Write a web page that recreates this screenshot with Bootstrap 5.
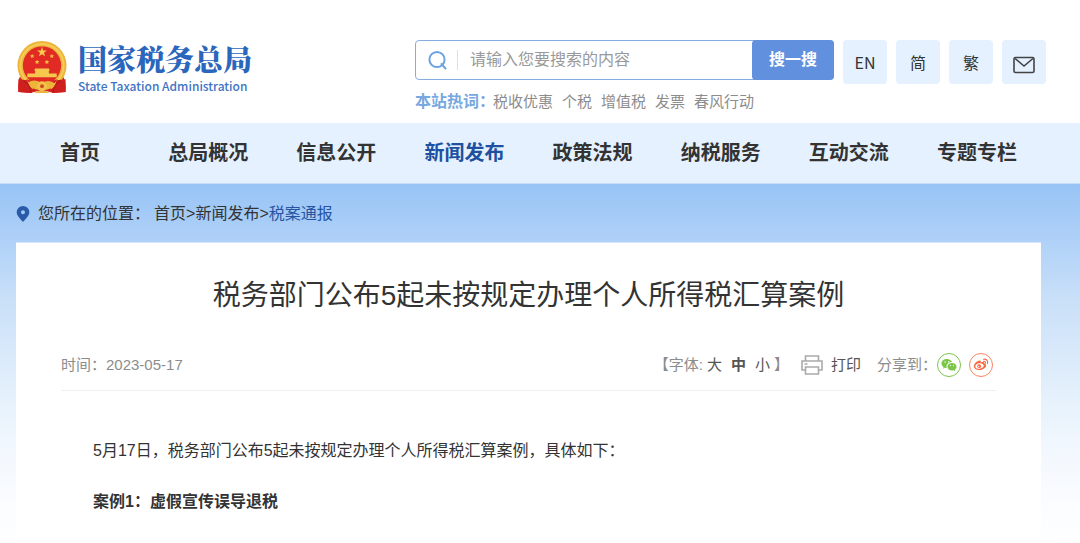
<!DOCTYPE html>
<html lang="zh-CN">
<head>
<meta charset="utf-8">
<meta name="viewport" content="width=device-width, initial-scale=1">
<title>税务部门公布5起未按规定办理个人所得税汇算案例</title>
<link rel="stylesheet" href="https://cdn.jsdelivr.net/npm/bootstrap@5.3.0/dist/css/bootstrap.min.css">
<style>
  body { font-family: "Liberation Sans", "Noto Sans CJK SC", sans-serif; font-size: 16px; line-height: 24px; color: #333; background: #fff; }
  a { color: inherit; text-decoration: none; }
  .site-wrap { padding-left: 16px; padding-right: 39px; }
  .site-header { padding: 40px 34px 9px 16px; }
  .brand-cn { font-family: "Noto Serif CJK SC", "Noto Sans CJK SC", serif; font-size: 29px; line-height: 38px; font-weight: 900; color: #2b66bd; }
  .brand-en { font-family: "Noto Sans CJK SC", sans-serif; font-size: 12px; line-height: 16px; font-weight: 500; color: #3f74c4; }
  .brand-en, .brand-cn { white-space: nowrap; }
  .brand-text { padding-left: 10px; }
  .header-tools { flex: 0 1 631px; }
  .tool-row { gap: 9px; }
  .search-box { height: 40px; border: 1px solid #86ade2; border-radius: 4px; }
  .search-box .form-control { border: 0; border-left: 1px solid #e0e0e0; border-radius: 0; height: 20px; padding: 0 12px; color: #666; box-shadow: none; background: none; }
  .search-box .form-control::placeholder { color: #999; opacity: 1; }
  .search-box label { padding: 0 10px 0 12px; }
  .search-btn { align-self: stretch; width: 82px; margin: -1px; background: #6090de; color: #fff; font-weight: 700; border: 0; border-radius: 4px; padding: 0; flex: none; }
  .tile { width: 44px; height: 44px; padding: 0; background: #e5f1ff; border: 0; border-radius: 4px; color: #333; font-family: "Noto Sans CJK SC", sans-serif; flex: none; }
  .hot-words { gap: 9px; font-size: 15px; line-height: 24px; margin-top: 6px; color: #8c8c8c; }
  .hot-title { width: 69px; white-space: nowrap; font-size: 16px; color: #78a8e0; font-weight: 700; }
  .main-nav { background: #e5f1ff; border-bottom: 1px solid #c5dcf9; }
  .main-nav .nav-link { color: #333; font-size: 20px; line-height: 28px; font-weight: 700; padding: 16px 0; white-space: nowrap; }
  .main-nav .nav-link.active { color: #2050a0; }
  .page-area { min-height: calc(100vh - 184px); background: linear-gradient(#97c4f5 0, #b0d1f8 58px, #c9e0f8 116px, #d9e9fa 170px, #e7f2fc 220px, #f3f8fe 270px, #fafcff 320px, #fff 360px); }
  .crumbs { padding-top: 18px; padding-bottom: 16px; }
  .crumbs .current { color: #2654a3; }
  .article { background: #fff; border-top: 1px solid #d5e6fb; padding: 35px 45px 30px; }
  .article h1 { font-size: 28px; line-height: 36px; font-weight: 400; margin: 0; }
  .meta { margin-top: 37px; padding: 0 3px 11px 0; border-bottom: 1px solid #f0f0f0; font-size: 15px; line-height: 28px; color: #8c8c8c; }
  .meta button { border: 0; background: none; padding: 0; color: #555; }
  .size-set { gap: 9px; }
  .article-body { padding: 48px 32px 0; }
  .article-body p { margin: 0 0 27px; }
  .article-body p:last-child { margin: 0; }
</style>
</head>
<body>
<header class="site-header d-flex justify-content-between align-items-start">
  <a href="#" class="d-flex align-items-center">
    <svg width="52" height="54" viewBox="0 0 52 55" aria-hidden="true">
      <path d="M3 38 Q1 47 2 53 L14 54 26 51 38 54 50 53 Q51 46 48 38Z" fill="#d3221f"/>
      <circle cx="26" cy="26" r="25" fill="#edb43a"/>
      <circle cx="26" cy="26" r="22" fill="none" stroke="#f6cd58" stroke-width="2"/>
      <circle cx="26" cy="26" r="19.500" fill="#e12a24"/>
      <path d="M26 7l1.2 3.6h3.8l-3 2.3 1.1 3.7-3.1-2.2-3.1 2.2 1.1-3.7-3-2.3h3.8z" fill="#f7cb4c"/>
      <g fill="#f1b941"><path d="M16 14l.7 1.5 1.6.2-1.1 1.1.3 1.6-1.5-.8-1.5.8.3-1.6-1.1-1.1 1.6-.2zM36 14l.7 1.5 1.6.2-1.1 1.1.3 1.6-1.5-.8-1.5.8.3-1.6-1.1-1.1 1.6-.2zM21 20l.7 1.5 1.6.2-1.1 1.1.3 1.6-1.5-.8-1.5.8.3-1.6-1.1-1.1 1.6-.2zM31 20l.7 1.5 1.6.2-1.1 1.1.3 1.6-1.5-.8-1.5.8.3-1.6-1.1-1.1 1.6-.2z"/>
      <path d="M19 29h14l1 2h-1v3h8v4H11v-4h8v-3h-1z" fill="#f5c84d"/></g>
      <path d="M2 40l9 1 5 13-14-1zM50 40l-9 1-5 13 14-1z" fill="#cf1f1e"/>
      <path d="M10 40q16 6 32 0l-5 6q-11-6-22 0z" fill="#d3221f"/>
      <path d="M12 43q7-4 14 1 7-5 14 1l-4 5q-5-4-10-1-6-3-10 1z" fill="#edb43a"/>
      <circle cx="26" cy="47" r="5" fill="#f2c14a"/><circle cx="26" cy="47" r="2" fill="#cf4a20"/>
      <path d="M7 42q6 1 8 11M45 42q-6 1-8 11" stroke="#a81818" fill="none"/>
      <path d="M18 54q8-5 16 0z" fill="#edb43a"/>
    </svg>
    <span class="brand-text d-flex flex-column">
      <span class="brand-cn">国家税务总局</span>
      <span class="brand-en">State Taxation Administration</span>
    </span>
  </a>
  <div class="header-tools">
    <div class="tool-row d-flex">
      <form class="search-box d-flex align-items-center flex-grow-1">
        <label for="q" class="d-flex" aria-label="搜索"><svg width="19" height="20" viewBox="0 0 19 20" fill="none" stroke="#6ba2e2" stroke-width="2"><circle cx="9" cy="9.500" r="7.6"/><path d="M13.500 14l4 4.500" stroke-linecap="round"/></svg></label>
        <input id="q" class="form-control" type="text" placeholder="请输入您要搜索的内容">
        <button type="button" class="search-btn">搜一搜</button>
      </form>
      <button type="button" class="tile">EN</button>
      <button type="button" class="tile">简</button>
      <button type="button" class="tile">繁</button>
      <button type="button" class="tile" aria-label="邮箱"><svg width="22" height="18" viewBox="0 0 22 18" fill="none" stroke="#444" stroke-width="1.6"><rect x="1" y="1.500" width="20" height="15" rx="1.5"/><path d="M2 2.500l9 7.5 9-7.500"/></svg></button>
    </div>
    <div class="hot-words d-flex"><span class="hot-title">本站热词：</span><a href="#">税收优惠</a><a href="#">个税</a><a href="#">增值税</a><a href="#">发票</a><a href="#">春风行动</a></div>
  </div>
</header>
<nav class="main-nav">
  <div class="site-wrap">
    <div class="nav nav-justified flex-nowrap">
      <a class="nav-link" href="#">首页</a><a class="nav-link" href="#">总局概况</a><a class="nav-link" href="#">信息公开</a><a class="nav-link active" aria-current="page" href="#">新闻发布</a><a class="nav-link" href="#">政策法规</a><a class="nav-link" href="#">纳税服务</a><a class="nav-link" href="#">互动交流</a><a class="nav-link" href="#">专题专栏</a>
    </div>
  </div>
</nav>
<main class="page-area site-wrap">
  <div class="crumbs d-flex align-items-center">
    <svg class="me-2" width="14" height="16" viewBox="0 0 14 16" aria-hidden="true"><path fill="#2a5ba8" fill-rule="evenodd" d="M7 0a6.3 6.3 0 0 1 6.3 6.3C13.300 10 9 13.500 7 16 5 13.500.7 10 .7 6.300A6.300 6.300 0 0 1 7 0zm0 4.300a2 2 0 1 0 0 4 2 2 0 0 0 0-4z"/></svg>
    <span class="me-1">您所在的位置：</span>
    <span><a href="#">首页</a>&gt;<a href="#">新闻发布</a>&gt;<a class="current" href="#">税案通报</a></span>
  </div>
  <article class="article">
    <h1 class="text-center">税务部门公布5起未按规定办理个人所得税汇算案例</h1>
    <div class="meta d-flex justify-content-between">
      <span>时间：2023-05-17</span>
      <div class="d-flex align-items-center">
        <span>【字体:</span>
        <span class="size-set d-flex ms-1"><button type="button">大</button><button type="button" class="fw-bold">中</button><button type="button">小</button></span>
        <span class="ms-1 me-2 pe-1">】</span>
        <button type="button" class="d-flex align-items-center gap-2 me-3"><svg width="22" height="20" viewBox="0 0 22 20" fill="none" stroke="#aaa" stroke-width="1.600" aria-hidden="true"><path d="M4.500 6V1h13v5M4.500 15H1V6h20v9h-3.500M4.500 12h13v7h-13zM3.500 9h3"/></svg>打印</button>
        <span>分享到：</span>
        <a href="#" class="d-flex me-2" aria-label="微信"><svg width="24" height="24" viewBox="0 0 24 24"><circle cx="12" cy="12" r="11.500" fill="none" stroke="#7bc549"/><g fill="#7bc549" transform="translate(4.500 4)scale(.94)"><path d="M11.176 14.429c-2.665 0-4.826-1.8-4.826-4.018 0-2.22 2.159-4.02 4.824-4.02S16 8.191 16 10.411c0 1.21-.65 2.301-1.666 3.036a.32.32 0 0 0-.12.366l.218.81a.6.6 0 0 1 .029.117.166.166 0 0 1-.162.162.2.2 0 0 1-.092-.03l-1.057-.61a.5.5 0 0 0-.256-.074.5.5 0 0 0-.142.021 5.7 5.7 0 0 1-1.576.22"/><path d="M0 6.826c0 1.455.781 2.765 2.001 3.656a.385.385 0 0 1 .143.439l-.161.6-.1.373a.5.5 0 0 0-.032.14.19.19 0 0 0 .193.193q.06 0 .111-.029l1.268-.733a.6.6 0 0 1 .308-.088q.088 0 .171.025a6.8 6.8 0 0 0 1.625.26 4.5 4.5 0 0 1-.177-1.251c0-2.936 2.785-5.02 5.824-5.02l.15.002C10.587 3.429 8.392 2 5.796 2 2.596 2 0 4.160 0 6.826"/></g><g fill="#fff"><circle cx="8.100" cy="9" r=".7"/><circle cx="11.800" cy="9" r=".7"/><circle cx="13.500" cy="12.600" r=".6"/><circle cx="16.500" cy="12.600" r=".6"/></g></svg></a>
        <a href="#" class="d-flex" aria-label="微博"><svg width="24" height="24" viewBox="0 0 24 24" fill="none"><circle cx="12" cy="12" r="11.500" stroke="#fa8560"/><path fill="#f76b45" fill-rule="evenodd" d="M10.500 7.500c1.200-.2 1.500.7 1.200 1.900 2-.8 4.200-.7 3.700 1.200 1.500.5 2 1.300 1.700 2.400-.5 2.300-3.600 4-6.600 4-3.200 0-5.700-1.500-5.700-3.800 0-2.300 3.300-5.400 5.700-5.700zM10.500 10.300c-2.500.2-4.200 1.500-4.200 3.100s1.800 2.500 4.200 2.300c2.500-.2 4.300-1.500 4.200-3.100-.1-1.500-1.900-2.500-4.200-2.300z"/><circle cx="10.200" cy="13.200" r="1.900" fill="#f76b45"/><circle cx="9.700" cy="13.600" r=".7" fill="#fff"/><path d="M14.500 6.200c2.800-.5 4.700 1.600 4 4.400M14.500 8.300c1.300-.2 2.200.6 1.900 2" stroke="#f76b45" stroke-width="1.100" stroke-linecap="round"/></svg></a>
      </div>
    </div>
    <div class="article-body">
      <p>5月17日，税务部门公布5起未按规定办理个人所得税汇算案例，具体如下：</p>
      <p><strong>案例1：虚假宣传误导退税</strong></p>
    </div>
  </article>
</main>
<script src="https://cdn.jsdelivr.net/npm/bootstrap@5.3.0/dist/js/bootstrap.bundle.min.js"></script>
</body>
</html>
